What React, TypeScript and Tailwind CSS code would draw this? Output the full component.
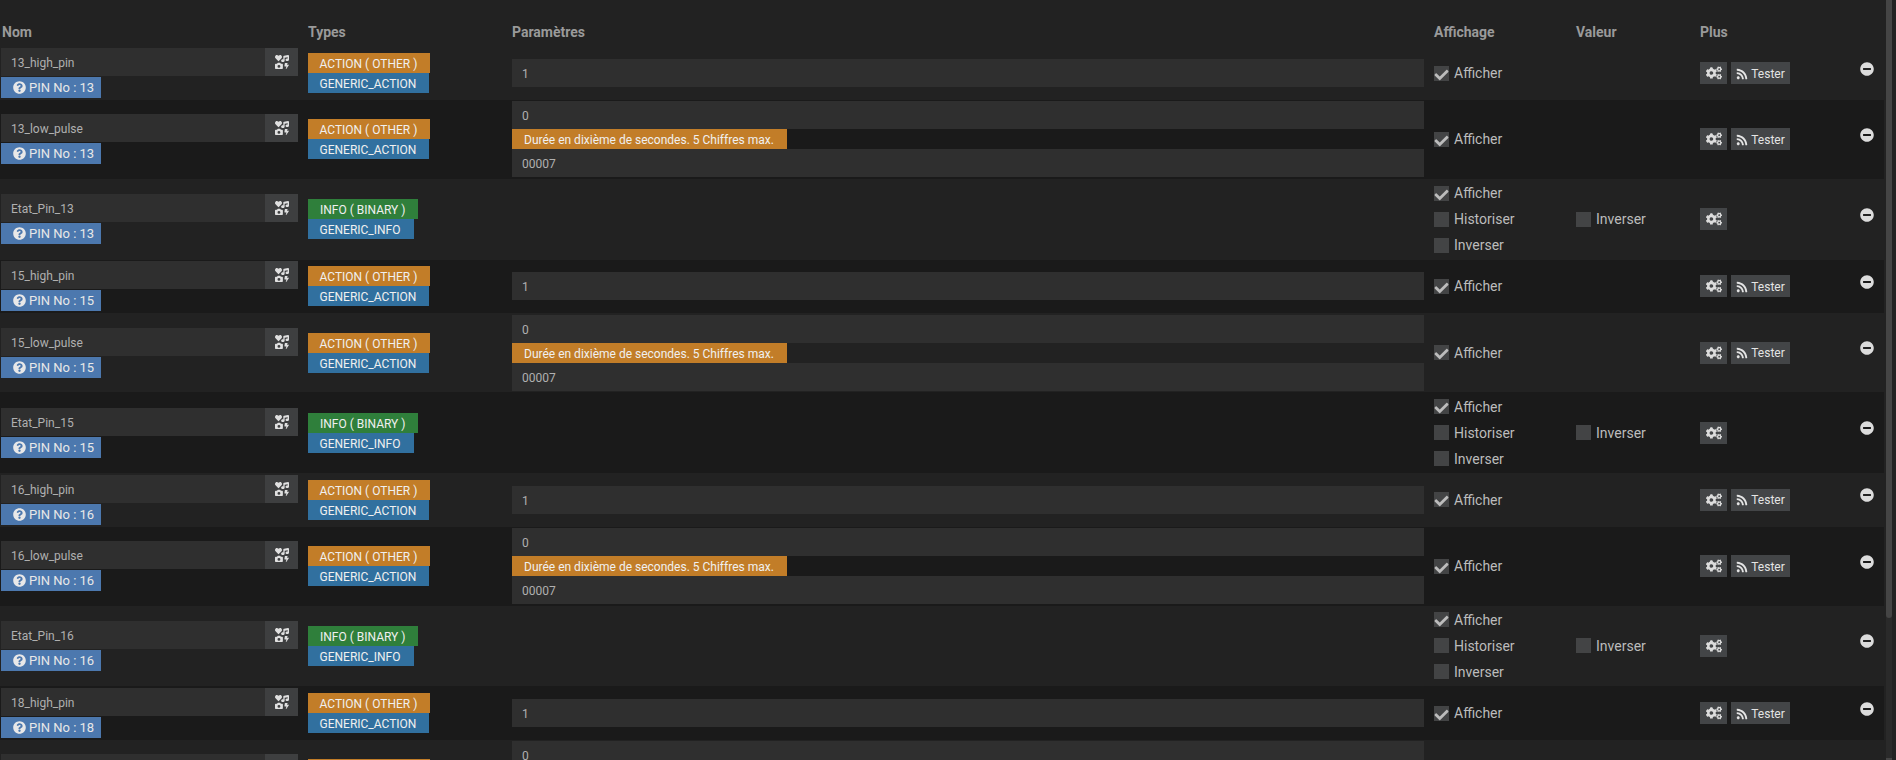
import { FaCheck, FaCogs, FaIcons, FaMinusCircle, FaQuestionCircle, FaRss } from "react-icons/fa"

type Kind = "high" | "low" | "etat"

interface Cmd {
  name: string
  pin: number
  kind: Kind
}

const pins = [13, 15, 16, 18]

const cmds: Cmd[] = pins.flatMap((pin) => [
  { name: `${pin}_high_pin`, pin, kind: "high" as Kind },
  { name: `${pin}_low_pulse`, pin, kind: "low" as Kind },
  { name: `Etat_Pin_${pin}`, pin, kind: "etat" as Kind },
])

const rowHeights: Record<Kind, string> = {
  high: "h-[53.67px]",
  low: "h-[79px]",
  etat: "h-[80.67px]",
}

const gridCols = "grid w-[1884px] grid-cols-[308px_204px_922px_142px_124px_160px_24px]"

function Field({ value }: { value: string }) {
  return <div className="flex h-7 items-center bg-[#2f2f2f] pt-0.5 pl-2.5 text-xs text-[#b0b0b0]">{value}</div>
}

function Check({ label, checked }: { label: string; checked?: boolean }) {
  return (
    <div className="flex h-[15px] items-center gap-[5px] text-sm leading-none text-[#bcbcbc]">
      <span className="relative h-[15px] w-[15px] shrink-0 bg-[#434445]">
        {checked && <FaCheck className="absolute top-[2px] left-0 h-[14px] w-[15px] text-[#bcbcbc]" />}
      </span>
      {label}
    </div>
  )
}

function IconButton() {
  return (
    <button className="flex h-[22px] w-[27px] items-center justify-center bg-[#434547] text-[#dcdcdc]">
      <FaCogs className="h-[14px] w-[16px]" />
    </button>
  )
}

function Row({ cmd, index }: { cmd: Cmd; index: number }) {
  const isInfo = cmd.kind === "etat"
  return (
    <div className={`${gridCols} ${rowHeights[cmd.kind]} items-center ${index % 2 === 0 ? "bg-[#222222]" : "bg-[#1a1a1a]"}`}>
      <div className="pl-px">
        <div className="flex h-7 w-[297px] bg-[#2f2f2f]">
          <div className="flex flex-1 items-center pt-0.5 pl-2.5 text-xs text-[#b0b0b0]">{cmd.name}</div>
          <div className="flex w-[33px] items-center justify-center bg-[#3e3f40] text-[#e0e0e0]">
            <FaIcons className="h-[14px] w-[14px]" />
          </div>
        </div>
        <div className="mt-px flex h-[21px] w-[100px] items-center gap-[3px] bg-[#4c78ae] pl-3 text-[13px] leading-none text-[#e8e8e8]">
          <FaQuestionCircle className="h-[13px] w-[13px]" />
          PIN No : {cmd.pin}
        </div>
      </div>

      <div className="flex flex-col items-start text-xs leading-none text-[#f0f0f0]">
        {isInfo ? (
          <>
            <div className="flex h-5 w-[110px] items-center bg-[#2f7f3b] pt-0.5 pl-3">INFO ( BINARY )</div>
            <div className="flex h-5 w-[106px] items-center bg-[#31709f] pt-0.5 pl-[11.5px]">GENERIC_INFO</div>
          </>
        ) : (
          <>
            <div className="flex h-5 w-[122px] items-center bg-[#c27d28] pt-0.5 pl-[11.5px]">ACTION ( OTHER )</div>
            <div className="flex h-5 w-[121px] items-center bg-[#31709f] pt-0.5 pl-[11.5px]">GENERIC_ACTION</div>
          </>
        )}
      </div>

      <div className="pr-2.5">
        {cmd.kind === "high" && <Field value="1" />}
        {cmd.kind === "low" && (
          <div>
            <Field value="0" />
            <div className="flex h-5 w-[275px] items-center bg-[#c27d28] pt-0.5 pl-3 text-xs leading-none text-[#f0f0f0]">
              Durée en dixième de secondes. 5 Chiffres max.
            </div>
            <Field value="00007" />
          </div>
        )}
      </div>

      <div className="flex flex-col gap-[11px]">
        <Check label="Afficher" checked />
        {isInfo && <Check label="Historiser" />}
        {isInfo && <Check label="Inverser" />}
      </div>

      <div>{isInfo && <Check label="Inverser" />}</div>

      <div className="flex gap-1">
        <IconButton />
        {!isInfo && (
          <button className="flex h-[22px] w-[59px] items-center justify-center gap-[3px] bg-[#434547] pt-px text-xs leading-none text-[#e4e4e4]">
            <FaRss className="h-3 w-3" />
            Tester
          </button>
        )}
      </div>

      <div className="-mt-[9px]">
        <FaMinusCircle className="h-[14px] w-[14px] text-[#dcdcdc]" />
      </div>
    </div>
  )
}

export default function App() {
  return (
    <div className="relative h-[760px] w-[1896px] overflow-hidden bg-[#222222] font-['Roboto',sans-serif]">
      <div className={`${gridCols} h-[46.33px] items-center pt-[17px] text-sm font-bold text-[#9a9a9a]`}>
        <div className="pl-0.5">Nom</div>
        <div>Types</div>
        <div>Paramètres</div>
        <div>Affichage</div>
        <div>Valeur</div>
        <div>Plus</div>
        <div />
      </div>
      {cmds.map((cmd, i) => (
        <Row key={cmd.name} cmd={cmd} index={i} />
      ))}
      <div className="absolute top-0 right-1 flex h-[760px] w-1.5 flex-col justify-between bg-[#2a2a2a]">
        <div className="h-[618px] rounded-b-[3px] bg-[#454545]" />
        <div className="h-0.5 bg-[#454545]" />
      </div>
    </div>
  )
}
